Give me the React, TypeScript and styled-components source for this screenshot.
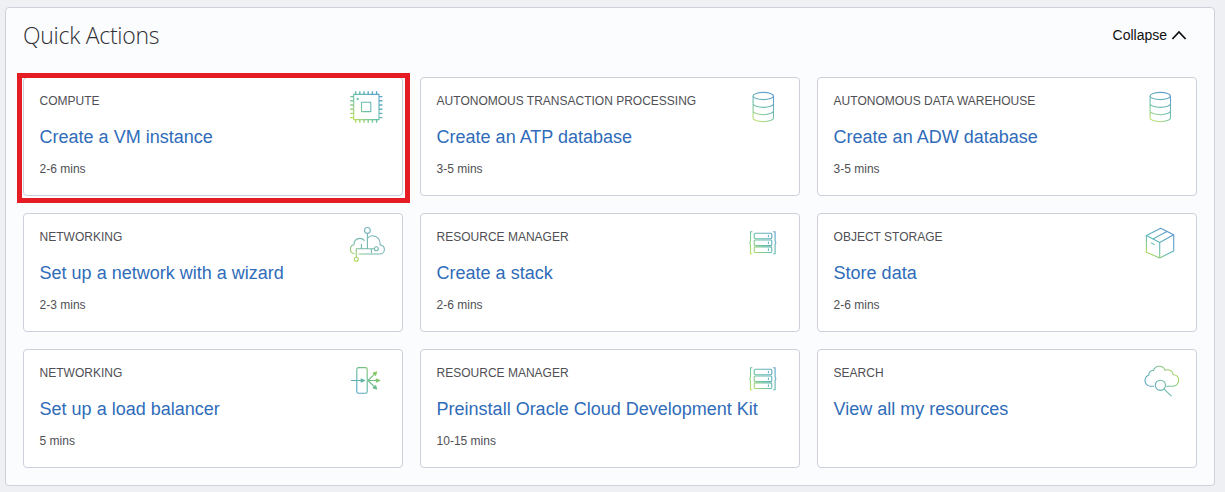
import React from "react";
import styled, { createGlobalStyle } from "styled-components";

const GlobalStyle = createGlobalStyle`
  * { box-sizing: border-box; }
  body {
    margin: 0;
    background: #eff0f4;
    font-family: "Liberation Sans", Arial, sans-serif;
  }
`;

const Page = styled.main`
  height: 492px;
  padding: 7px 10px 6px 5px;
  overflow: hidden;
`;

const Panel = styled.section`
  height: 479px;
  padding: 0 17px;
  background: #fbfcfe;
  border: 1px solid #cfd1da;
  border-radius: 4px;
`;

const PanelHeader = styled.header`
  display: flex;
  justify-content: space-between;
  height: 69px;
`;

const Heading = styled.h2`
  margin: 10px 0 0;
  font: 300 23px/35px "Open Sans", sans-serif;
  letter-spacing: -0.28px;
  color: #303034;
`;

const CollapseButton = styled.button`
  display: flex;
  align-items: center;
  gap: 4px;
  height: 20px;
  margin: 17px 10px 0 0;
  padding: 0;
  border: 0;
  background: none;
  color: #111;
  font: 14px/20px "Liberation Sans", Arial, sans-serif;
`;

const CardGrid = styled.div`
  display: grid;
  grid-template-columns: repeat(3, 380px);
  grid-auto-rows: 119px;
  gap: 17px;
`;

const Card = styled.article<{ $highlighted?: boolean }>`
  position: relative;
  display: flex;
  padding: 9px 15px 0 15.6px;
  background: #fff;
  border: 1px solid #cdd0da;
  border-radius: 4px;
  ${({ $highlighted }) =>
    $highlighted &&
    `&::after {
      content: "";
      position: absolute;
      inset: -5px -8px -8px -7px;
      border: 5px solid #e61c25;
    }`}
`;

const CardText = styled.div`
  display: flex;
  flex: 1 1 0;
  flex-direction: column;
  min-width: 0;
  padding-top: 6px;
  white-space: nowrap;
`;

const Category = styled.span`
  font-size: 12px;
  line-height: 16px;
  color: #4f4f54;
`;

const ActionLink = styled.a`
  margin-top: 16px;
  font-size: 18px;
  line-height: 24px;
  color: #2f6cb9;
`;

const Duration = styled.span`
  margin-top: 12px;
  font-size: 12px;
  line-height: 16px;
  color: #4f4f54;
`;

const IconSvg = styled.svg`
  flex: none;
  width: 40px;
  height: 40px;
  overflow: visible;
  fill: none;
  stroke-width: 1.1;
  stroke-linecap: round;
  stroke-linejoin: round;
`;

type IconName = "chip" | "database" | "network" | "stack" | "box" | "balancer" | "search";

const pins = [0, 1, 2, 3, 4, 5];

const shapes: Record<IconName, React.ReactNode> = {
  chip: (
    <>
      <rect x="6.7" y="7.4" width="25.3" height="25.2" />
      <rect x="14.5" y="15.3" width="9.3" height="9.3" />
      <circle cx="10.7" cy="12" r="0.6" />
      {pins.map((i) => (
        <path
          key={i}
          strokeWidth="1.4"
          strokeLinecap="butt"
          d={`M${8.6 + i * 4.2} 4.200v3M${8.6 + i * 4.2} 32.6v3.200M3.200 ${9.6 + i * 4.2}h3.400M32 ${9.6 + i * 4.2}h3.400`}
        />
      ))}
    </>
  ),
  database: (
    <>
      <ellipse cx="19.3" cy="9" rx="10.2" ry="3.6" />
      <path d="M9.1 9v22c0 2 4.6 3.7 10.2 3.7S29.5 33 29.5 31V9M9.1 16.7c0 2 4.6 3.7 10.2 3.7s10.2-1.7 10.2-3.7M9.1 24c0 2 4.6 3.7 10.2 3.7S29.5 26 29.5 24" />
    </>
  ),
  network: (
    <>
      <circle cx="20.4" cy="7.4" r="2.9" />
      <circle cx="29.3" cy="25.7" r="2" />
      <circle cx="9.3" cy="36.3" r="2" />
      <path d="M20.4 10.3v15.4M9.3 34.3v-8.6h18M14.4 21.3v4.4M24.4 25.7v4" />
      <path d="M7 30.800C4.6 30 3.4 28.300 3.4 26.200c0-2.200 1.400-4 3.600-4.400-.5-3.800 2.500-6.400 5.800-6.400 1.900 0 3.400.7 4.500 2M20.800 15c1-1.600 3-2.400 5-2.300 4.200.2 7.400 3.700 7.400 8 0 .5 0 .9-.2 1.300 2.600.3 4.400 2 4.400 4.400 0 2.500-2 4.600-4.600 4.600H12" />
    </>
  ),
  stack: (
    <g transform="translate(0 -2)">
      <rect x="10.2" y="12.2" width="17.6" height="5.6" rx="1" />
      <rect x="10.2" y="19" width="17.6" height="5.6" rx="1" />
      <rect x="10.2" y="25.9" width="17.6" height="5.6" rx="1" />
      <path d="M24.4 14.2v1.6M24.4 21v1.6M24.4 27.9v1.6" />
      <path d="M8 10.7H6.5v9.5l-.8 1.5.8 1.5v9.5H8M29.6 10.7h1.5v9.5l.8 1.5-.8 1.5v9.5h-1.5" />
    </g>
  ),
  box: (
    <path d="M5.4 12.5 19.7 5.2l13 6.5v16.300L18.7 34.900 5.4 29.200ZM5.4 12.500l13.3 7 14-7.800M18.7 19.500V34.900M11.8 15.900 26 8.400M10.300 20l3 1.400" />
  ),
  balancer: (
    <g transform="translate(0 -0.7)">
      <rect x="9.8" y="9.3" width="10.4" height="25.6" rx="1.8" />
      <path d="M4.4 22.2h9.8M21 22.2h9M21 22.2l7.1-6.8M21 22.2l7.1 6.8" />
      <path
        fill="url(#grad-balancer)"
        d="m14.2 20.6 3.4 1.6-3.4 1.6zM29.3 20.7l3.4 1.5-3.4 1.5zM26.3 14.7l3.3-1-1 3.3zM26.3 29.7l3.3 1-1-3.3z"
      />
    </g>
  ),
  search: (
    <g transform="translate(0 -0.7)">
      <path d="M12.7 28H9.8C6.5 28 4 25.4 4 22.4c0-2.8 1.6-4.8 3.8-5.5-.2-3.1 2-4.9 4.7-4.7C13.3 9.6 15.6 8 18.3 8c2.7 0 4.9 1.6 5.6 4 4-1.6 8 .7 8.3 4.4 3.2-.1 5.5 2.4 5.5 5.4 0 3.3-2.4 6-6 6.2h-6" />
      <circle cx="19.4" cy="27" r="5.1" />
      <path d="m23.1 30.8 7.1 6.8" />
    </g>
  ),
};

interface Gradient {
  from: [number, number];
  to: [number, number];
  colors: [string, string, string];
}

const gradients: Record<IconName, Gradient> = {
  chip: { from: [4, 34], to: [34, 6], colors: ["#c3e055", "#6cc0a8", "#5b9fd0"] },
  database: { from: [9, 34], to: [27, 8], colors: ["#c8e468", "#72c2ac", "#62a0d0"] },
  network: { from: [5, 37], to: [26, 12], colors: ["#bddc50", "#72b9a6", "#78b5bd"] },
  stack: { from: [5, 32], to: [32, 9], colors: ["#bce45c", "#68c0a8", "#5c9ece"] },
  box: { from: [7, 33], to: [28, 10], colors: ["#b4dc50", "#60b8b4", "#5a9acc"] },
  balancer: { from: [8, 31], to: [30, 12], colors: ["#54a5c6", "#62b89c", "#90cc54"] },
  search: { from: [10, 32], to: [36, 12], colors: ["#5ca8c2", "#6cbca6", "#b2da54"] },
};

function ActionIcon({ name, id }: { name: IconName; id: string }) {
  const { from, to, colors } = gradients[name];
  return (
    <IconSvg viewBox="0 0 40 40" stroke={`url(#${id})`} aria-hidden="true">
      <defs>
        <linearGradient id={id} gradientUnits="userSpaceOnUse" x1={from[0]} y1={from[1]} x2={to[0]} y2={to[1]}>
          <stop offset="0" stopColor={colors[0]} />
          <stop offset="0.45" stopColor={colors[1]} />
          <stop offset="1" stopColor={colors[2]} />
        </linearGradient>
      </defs>
      {shapes[name]}
    </IconSvg>
  );
}

interface Action {
  category: string;
  title: string;
  duration?: string;
  icon: IconName;
}

const actions: Action[] = [
  { category: "COMPUTE", title: "Create a VM instance", duration: "2-6 mins", icon: "chip" },
  { category: "AUTONOMOUS TRANSACTION PROCESSING", title: "Create an ATP database", duration: "3-5 mins", icon: "database" },
  { category: "AUTONOMOUS DATA WAREHOUSE", title: "Create an ADW database", duration: "3-5 mins", icon: "database" },
  { category: "NETWORKING", title: "Set up a network with a wizard", duration: "2-3 mins", icon: "network" },
  { category: "RESOURCE MANAGER", title: "Create a stack", duration: "2-6 mins", icon: "stack" },
  { category: "OBJECT STORAGE", title: "Store data", duration: "2-6 mins", icon: "box" },
  { category: "NETWORKING", title: "Set up a load balancer", duration: "5 mins", icon: "balancer" },
  { category: "RESOURCE MANAGER", title: "Preinstall Oracle Cloud Development Kit", duration: "10-15 mins", icon: "stack" },
  { category: "SEARCH", title: "View all my resources", icon: "search" },
];

export default function App() {
  return (
    <Page>
      <GlobalStyle />
      <Panel>
        <PanelHeader>
          <Heading>Quick Actions</Heading>
          <CollapseButton>
            Collapse
            <svg width="16" height="12" viewBox="0 0 16 12" fill="none" stroke="#111" strokeWidth="1.8">
              <path d="M1.4 10 8 3l6.6 7" />
            </svg>
          </CollapseButton>
        </PanelHeader>
        <CardGrid>
          {actions.map((action, index) => (
            <Card key={action.category + action.title} $highlighted={index === 0}>
              <CardText>
                <Category>{action.category}</Category>
                <ActionLink>{action.title}</ActionLink>
                {action.duration && <Duration>{action.duration}</Duration>}
              </CardText>
              <ActionIcon
                name={action.icon}
                id={action.icon === "balancer" ? "grad-balancer" : `grad-${action.icon}-${index}`}
              />
            </Card>
          ))}
        </CardGrid>
      </Panel>
    </Page>
  );
}
